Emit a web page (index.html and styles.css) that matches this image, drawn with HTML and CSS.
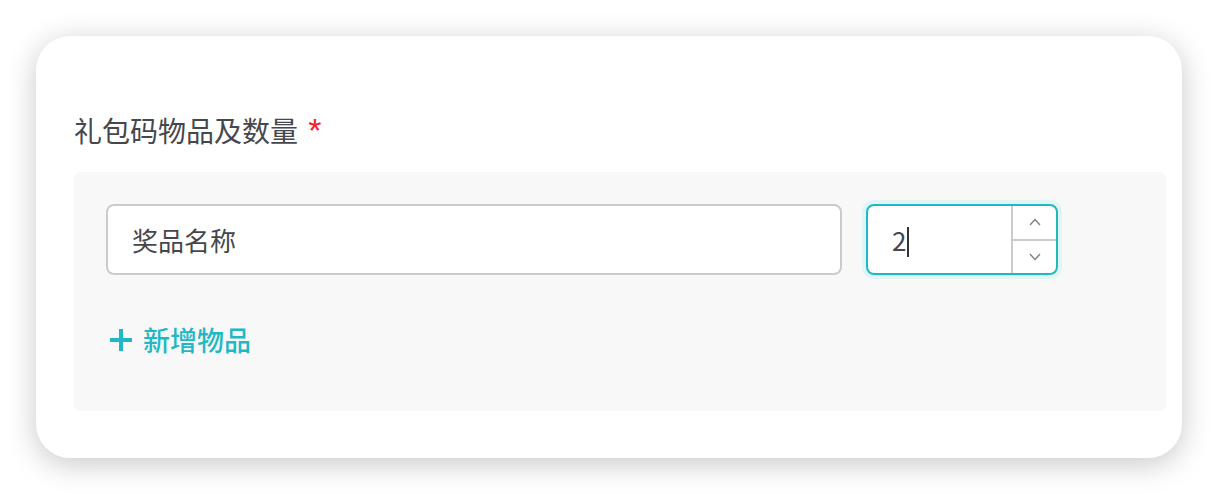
FILE: index.html
```html
<!DOCTYPE html>
<html lang="zh-CN">
<head>
  <meta charset="UTF-8">
  <meta name="viewport" content="width=device-width, initial-scale=1.0">
  <title>礼包码物品</title>
  <link rel="stylesheet" href="styles.css">
</head>
<body>
  <div class="card">
    <div class="field-label">礼包码物品及数量 <span class="required">*</span></div>

    <div class="items-panel">
      <div class="item-row">
        <div class="text-input">奖品名称</div>
        <div class="number-input">
          <div class="number-value">2<span class="caret"></span></div>
          <div class="spinner">
            <div class="spin-btn">
              <svg width="12" height="8" viewBox="0 0 12 8"><path d="M1 7 L6 1.5 L11 7" fill="none" stroke="#7a7c80" stroke-width="1.3"/></svg>
            </div>
            <div class="spin-btn">
              <svg width="12" height="8" viewBox="0 0 12 8"><path d="M1 1 L6 6.5 L11 1" fill="none" stroke="#7a7c80" stroke-width="1.3"/></svg>
            </div>
          </div>
        </div>
      </div>

      <div class="add-item">
        <svg class="plus" width="24" height="24" viewBox="0 0 24 24"><path d="M12 1 V23 M1 12 H23" stroke="#1fb9c4" stroke-width="4"/></svg>
        <span>新增物品</span>
      </div>
    </div>
  </div>
</body>
</html>
```

FILE: styles.css
```css
body {
  margin: 0;
  padding: 36px;
  background-color: #fff;
  font-family: "Noto Sans CJK SC", "Noto Sans", sans-serif;
  color: #45474c;
}

.card {
  background-color: #fff;
  border-radius: 34px;
  box-shadow: 0 6px 30px rgba(0,0,0,0.22);
  padding: 74px 16px 47px 38px;
}

.field-label {
  font-size: 28px;
  line-height: 40px;
}

.required {
  font-family: "Liberation Sans", Arial, sans-serif;
  font-size: 34px;
  line-height: 0;
  color: #f5222d;
  margin-left: 4px;
}

.items-panel {
  margin-top: 22px;
  background-color: #f8f8f8;
  border-radius: 6px;
  padding: 32px 32px 51px 32px;
}

.item-row {
  display: flex;
  gap: 24px;
}

.text-input {
  box-sizing: border-box;
  width: 736px;
  height: 71px;
  border: 2px solid #c9cbce;
  border-radius: 8px;
  background-color: #fff;
  padding: 0 24px;
  font-size: 26px;
  line-height: 67px;
}

.number-input {
  box-sizing: border-box;
  width: 192px;
  height: 71px;
  border: 2px solid #1fb9c4;
  border-radius: 8px;
  background-color: #fff;
  box-shadow: 0 0 0 4px #e2f5f6;
  display: flex;
}

.number-value {
  flex: 1;
  padding: 0 24px;
  font-size: 26px;
  line-height: 67px;
}

.caret {
  display: inline-block;
  width: 2px;
  height: 30px;
  background-color: #333;
  vertical-align: -6px;
  margin-left: 1px;
}

.spinner {
  width: 43px;
  border-left: 2px solid #c9cbce;
  display: flex;
  flex-direction: column;
}

.spin-btn {
  flex: 1;
  display: flex;
  align-items: center;
  justify-content: center;
}

.spin-btn:first-child {
  border-bottom: 2px solid #c9cbce;
}

.add-item {
  margin-top: 45px;
  display: flex;
  align-items: center;
  gap: 10px;
  color: #1fb9c4;
  font-size: 27px;
  font-weight: 500;
  line-height: 40px;
  padding-left: 3px;
}
```
